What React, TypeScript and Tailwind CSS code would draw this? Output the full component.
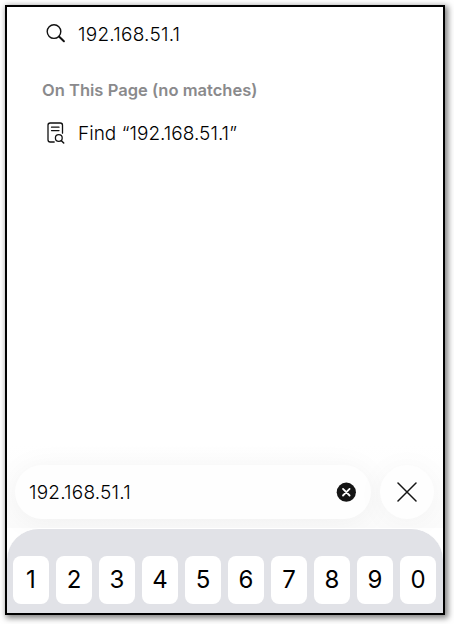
import { useState } from "react";

const KEYS = ["1", "2", "3", "4", "5", "6", "7", "8", "9", "0"];

function SearchIcon() {
  return (
    <svg width="20" height="20" viewBox="0 0 20 20" fill="none" stroke="#111" strokeLinecap="round">
      <circle cx="8" cy="7.6" r="6.8" strokeWidth="1.4" />
      <path d="M13 12.6L17.9 17.2" strokeWidth="2" />
    </svg>
  );
}

function FindIcon() {
  return (
    <svg width="18" height="22" viewBox="0 0 18 22" fill="none" stroke="#111" strokeWidth="1.3" strokeLinecap="round">
      <path d="M7.2 20H3.2Q1 20 1 17.8V3.2Q1 1 3.2 1H13.3Q15.5 1 15.5 3.2V11.2" />
      <path d="M4.5 5.2H12M4.5 8.6H12" />
      <circle cx="11.8" cy="16" r="3.4" />
      <path d="M14.4 18.7L16.7 21" strokeWidth="1.5" />
    </svg>
  );
}

export default function App() {
  const [query, setQuery] = useState("192.168.51.1");

  return (
    <div className="h-[624px] w-[454px] overflow-hidden bg-white p-[5px] font-['Inter',sans-serif] text-black">
      <div className="flex h-[610px] w-[440px] flex-col overflow-hidden border-2 border-black bg-white shadow-[2px_2px_6px_1px_rgba(0,0,0,0.5)]">
        <div className="flex h-[438px] shrink-0 flex-col">
          <div className="mt-[11px] flex h-8 items-center pl-[39px]">
            <SearchIcon />
            <span className="ml-3 text-[19px] leading-[31px] font-light tracking-[0.24px]">{query}</span>
          </div>
          <h2 className="mt-[28px] pl-[35px] text-[16.5px] leading-6 font-semibold tracking-[0.02px] text-[#8a8a8c]">
            On This Page (no matches)
          </h2>
          <div className="mt-[15px] flex h-8 items-center pl-[40px]">
            <FindIcon />
            <span className="ml-[13px] pt-[2px] text-[19px] leading-8 font-light tracking-[0.02px]">Find “{query}”</span>
          </div>
        </div>

        <div className="flex h-[83px] shrink-0 gap-[9px] bg-linear-to-b from-white to-[#fbfbfb] px-2 pt-[20px]">
          <div className="flex h-[54px] w-[356px] items-center justify-between rounded-full bg-[#fefefe] pr-[15px] pl-[14px] shadow-[0_3px_30px_rgba(0,0,0,0.05)]">
            <span className="pt-[2px] text-[19px] font-light tracking-[0.2px]">{query}</span>
            <button aria-label="Clear" onClick={() => setQuery("")}>
              <svg width="20" height="20" viewBox="0 0 20 20">
                <circle cx="10.3" cy="10.2" r="9.6" fill="#151515" />
                <path d="M7 6.9L13.6 13.5M13.6 6.9L7 13.5" stroke="#fff" strokeWidth="1.8" strokeLinecap="round" />
              </svg>
            </button>
          </div>
          <button
            aria-label="Close"
            className="flex size-[54px] items-center justify-center rounded-full bg-[#fefefe] shadow-[0_3px_30px_rgba(0,0,0,0.04)]"
          >
            <svg width="20" height="20" viewBox="0 0 20 20" stroke="#151515" strokeWidth="1.5" strokeLinecap="round">
              <path d="M1 1L19 19M19 1L1 19" />
            </svg>
          </button>
        </div>

        <div className="flex-1">
          <div className="relative flex h-full gap-[7px] rounded-t-[32px] border-t border-white bg-[#e1e2e7] pt-[27px] pl-[6px]">
            {KEYS.map((key) => (
              <button
                key={key}
                onClick={() => setQuery((q) => q + key)}
                className="h-12 w-[36px] shrink-0 rounded-[8px] bg-white text-[24px] leading-[46px] text-black"
              >
                {key}
              </button>
            ))}
          </div>
        </div>
      </div>
    </div>
  );
}
